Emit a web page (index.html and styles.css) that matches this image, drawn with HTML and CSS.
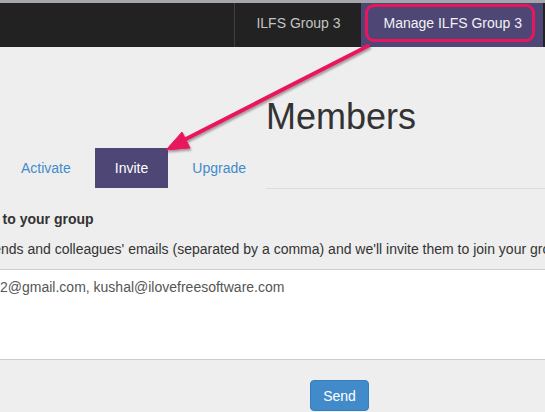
FILE: index.html
```html
<!DOCTYPE html>
<html lang="en">
<head>
<meta charset="utf-8">
<title>Members</title>
<link rel="stylesheet" href="styles.css">
</head>
<body>
<div class="topstrip"></div>
<nav class="navbar">
  <a class="nav-link divided" href="#">ILFS Group 3</a>
  <a class="nav-link active" href="#">Manage ILFS Group 3</a>
</nav>
<main class="page">
  <h1 class="title">Members</h1>
  <div class="tabs">
    <a class="tab" href="#">Activate</a>
    <a class="tab current" href="#">Invite</a>
    <a class="tab" href="#">Upgrade</a>
    <div class="tab-fill"></div>
  </div>
  <section class="invite">
    <h2 class="invite-title">Invite members to your group</h2>
    <p class="invite-text">Enter your friends and colleagues' emails (separated by a comma) and we'll invite them to join your group.</p>
    <div class="email-box">2@gmail.com, kushal@ilovefreesoftware.com</div>
    <div class="actions">
      <button class="btn-send" type="button">Send</button>
    </div>
  </section>
</main>
<svg class="arrow" width="545" height="412" viewBox="0 0 545 412">
  <defs>
    <filter id="sh" x="-20%" y="-20%" width="140%" height="140%">
      <feDropShadow dx="1" dy="2" stdDeviation="1.2" flood-color="#000" flood-opacity="0.35"/>
    </filter>
  </defs>
  <g filter="url(#sh)" fill="#e8175d" stroke="#e8175d">
    <line x1="368" y1="46" x2="184" y2="140" stroke-width="4" stroke-linecap="round"/>
    <polygon points="166,150 182,132 190,148" stroke-width="1" stroke-linejoin="round"/>
  </g>
</svg>
</body>
</html>
```

FILE: styles.css
```css
html, body {
  margin: 0;
  padding: 0;
}

body {
  width: 545px;
  height: 412px;
  overflow: hidden;
  position: relative;
  background: #eeeeee;
  font-family: "Liberation Sans", Arial, sans-serif;
  font-size: 14px;
  line-height: 20px;
  color: #333333;
}

.topstrip {
  height: 3px;
  background: #a4a8ad;
}

.navbar {
  height: 44px;
  background: #222222;
  display: flex;
  justify-content: flex-end;
  padding-right: 2px;
}

.nav-link {
  display: block;
  padding: 10px 21px 0;
  color: #c4c4c4;
  text-decoration: none;
  position: relative;
}

.nav-link.divided {
  border-left: 1px solid #3f3f3f;
}

.nav-link.active {
  padding-left: 22px;
  background: #4e4776;
  color: #f2f2f2;
}

.nav-link.active::after {
  content: "";
  position: absolute;
  left: 4px;
  right: 8px;
  top: 1px;
  bottom: 5px;
  border: 3px solid #e8175d;
  border-radius: 9px;
}

.page {
  display: flex;
  flex-direction: column;
}

.title {
  margin: 50px 0 0 266px;
  font-size: 36px;
  font-weight: normal;
  line-height: 40px;
  color: #333333;
}

.tabs {
  display: flex;
  margin-top: 11px;
  padding-left: 1px;
  height: 41px;
}

.tab {
  display: block;
  height: 40px;
  line-height: 40px;
  padding: 0 20px;
  margin-right: 4px;
  color: #428bca;
  text-decoration: none;
}

.tab.current {
  background: #4e4776;
  color: #ffffff;
}

.tab-fill {
  flex: 1;
  height: 40px;
  border-bottom: 1px solid #dddddd;
  margin-left: -4px;
}

.invite {
  display: flex;
  flex-direction: column;
}

.invite-title {
  margin: 20px 0 0 -104px;
  font-size: 14px;
  line-height: 20px;
  font-weight: bold;
  white-space: nowrap;
}

.invite-text {
  margin: 10px 0 0 -87px;
  white-space: nowrap;
}

.email-box {
  margin-top: 10px;
  height: 82px;
  padding: 7px 0 0 0;
  background: #ffffff;
  border-top: 1px solid #cccccc;
  border-bottom: 1px solid #cccccc;
  color: #555555;
  white-space: nowrap;
}

.actions {
  display: flex;
  padding-left: 310px;
  margin-top: 20px;
}

.btn-send {
  height: 31px;
  width: 59px;
  padding: 0;
  font-family: "Liberation Sans", Arial, sans-serif;
  font-size: 14px;
  color: #ffffff;
  background: #428bca;
  border: 1px solid #357ebd;
  border-radius: 4px;
}

.arrow {
  position: absolute;
  left: 0;
  top: 0;
  pointer-events: none;
}
```
